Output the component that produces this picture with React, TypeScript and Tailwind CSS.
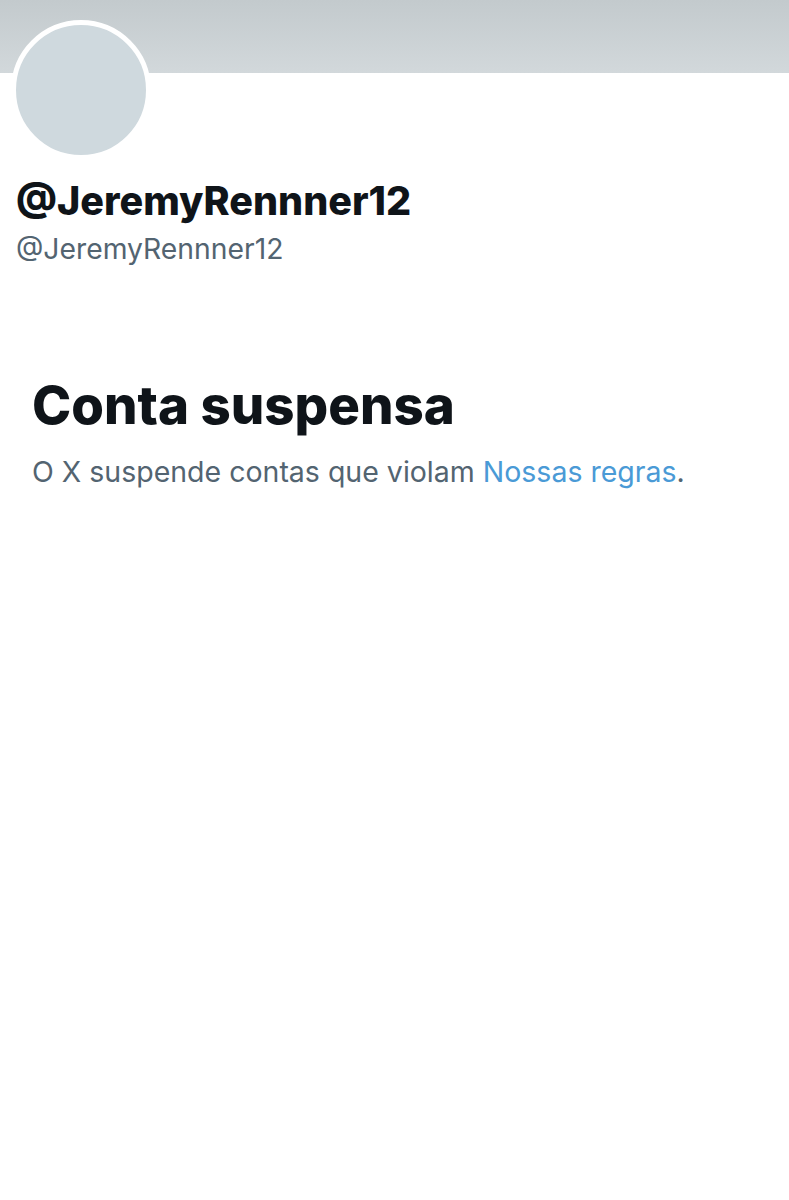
export default function App() {
  return (
    <div className="min-h-[1200px] w-full bg-white" style={{ fontFamily: "Inter, 'Liberation Sans', sans-serif" }}>
      <div className="h-[73px] w-full bg-gradient-to-b from-[#c3cacd] to-[#d2d8db]" />
      <div className="px-[11px]">
        <div className="-mt-[53px] h-[140px] w-[140px] rounded-full border-[5px] border-white bg-[#cfd9de]" />
      </div>
      <div className="px-[16px] pt-[19px]">
        <h1 className="text-[39.5px] leading-[44px] font-extrabold text-[#0f1419]">@JeremyRennner12</h1>
        <p className="mt-[10px] text-[28.3px] leading-[32px] text-[#536471]">@JeremyRennner12</p>
      </div>
      <div className="px-[32px] pt-[110px]">
        <h2 className="text-[52.8px] leading-[60px] font-extrabold text-[#0f1419]">Conta suspensa</h2>
        <p className="mt-[21px] text-[28.5px] leading-[32px] text-[#536471]">
          O X suspende contas que violam <span className="text-[#4a9ad6]">Nossas regras</span>.
        </p>
      </div>
    </div>
  );
}
